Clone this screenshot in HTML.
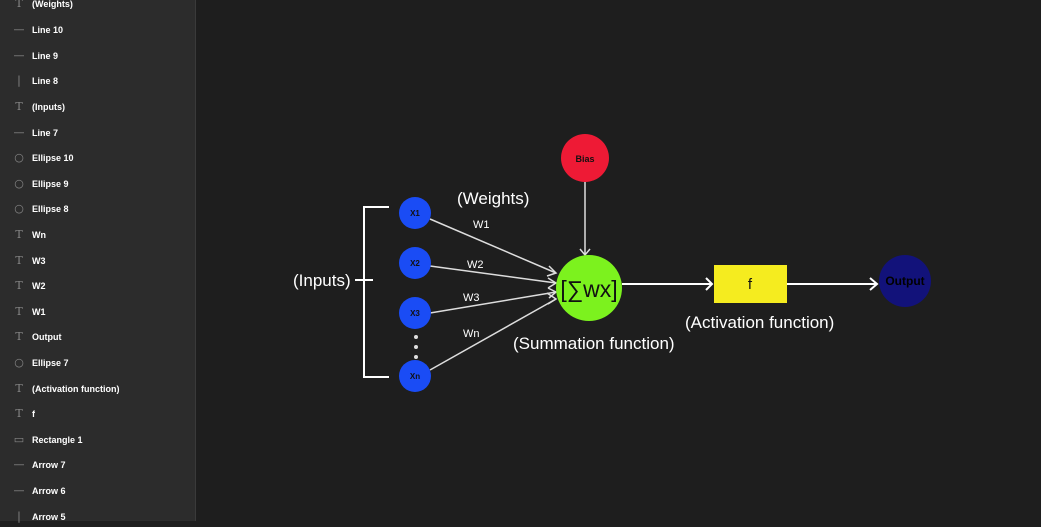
<!DOCTYPE html>
<html><head><style>
body{margin:0;width:1041px;height:521px;overflow:hidden;background:#1e1e1e;font-family:"Liberation Sans",sans-serif;position:relative}
#sb{position:absolute;left:0;top:0;width:195px;height:521px;background:#2c2c2c;border-right:1px solid #3a3a3a}
.r{position:absolute;left:0;height:20px;width:195px;color:#fff;font-size:9px;font-weight:bold;line-height:20px}
.r span{position:absolute;left:32px}
.ic{position:absolute;left:13px;top:4px;width:12px;height:12px;color:#888;font-size:11px;line-height:12px;text-align:center;font-weight:normal;font-style:normal;font-family:"DejaVu Serif",serif}
</style></head><body>
<div id="sb">
<div class="r" style="top:-6px"><i class="ic">T</i><span>(Weights)</span></div>
<div class="r" style="top:20px"><i class="ic">—</i><span>Line 10</span></div>
<div class="r" style="top:46px"><i class="ic">—</i><span>Line 9</span></div>
<div class="r" style="top:71px"><i class="ic">|</i><span>Line 8</span></div>
<div class="r" style="top:97px"><i class="ic">T</i><span>(Inputs)</span></div>
<div class="r" style="top:123px"><i class="ic">—</i><span>Line 7</span></div>
<div class="r" style="top:148px"><i class="ic">○</i><span>Ellipse 10</span></div>
<div class="r" style="top:174px"><i class="ic">○</i><span>Ellipse 9</span></div>
<div class="r" style="top:199px"><i class="ic">○</i><span>Ellipse 8</span></div>
<div class="r" style="top:225px"><i class="ic">T</i><span>Wn</span></div>
<div class="r" style="top:251px"><i class="ic">T</i><span>W3</span></div>
<div class="r" style="top:276px"><i class="ic">T</i><span>W2</span></div>
<div class="r" style="top:302px"><i class="ic">T</i><span>W1</span></div>
<div class="r" style="top:327px"><i class="ic">T</i><span>Output</span></div>
<div class="r" style="top:353px"><i class="ic">○</i><span>Ellipse 7</span></div>
<div class="r" style="top:379px"><i class="ic">T</i><span>(Activation function)</span></div>
<div class="r" style="top:404px"><i class="ic">T</i><span>f</span></div>
<div class="r" style="top:430px"><i class="ic">▭</i><span>Rectangle 1</span></div>
<div class="r" style="top:455px"><i class="ic">—</i><span>Arrow 7</span></div>
<div class="r" style="top:481px"><i class="ic">—</i><span>Arrow 6</span></div>
<div class="r" style="top:507px"><i class="ic">|</i><span>Arrow 5</span></div>
</div>
<svg style="position:absolute;left:0;top:0" width="1041" height="521" font-family="Liberation Sans, sans-serif">
<g stroke="#fff" stroke-width="2" fill="none">
<path d="M389 207H364V377H389M355 280H373"/>
</g>
<g stroke="#ddd" stroke-width="1.5" fill="none">
<path d="M430 219L556 273M430 266L556 283M430 313L556 292M430 370L556 299"/>
<path d="M549 266L556 273L547 276M548 278L556 283L548 288M548 288L556 292L549 298M547 293L556 299L548 304"/>
<path d="M585 182V254M580 249L585 255L590 249"/>
</g>
<g stroke="#fff" stroke-width="2" fill="none">
<path d="M622 284H712M706 278L712 284L706 290M787 284H876M870 278L877 284L870 290"/>
</g>
<circle cx="585" cy="158" r="24" fill="#ee1a35"/>
<text x="585" y="162" font-size="9" font-weight="bold" text-anchor="middle" fill="#111">Bias</text>
<circle cx="589" cy="288" r="33" fill="#7cf21e"/>
<text x="589" y="297" font-size="23" text-anchor="middle" fill="#111">[∑wx]</text>
<g fill="#1a4cf5"><circle cx="415" cy="213" r="16"/><circle cx="415" cy="263" r="16"/><circle cx="415" cy="313" r="16"/><circle cx="415" cy="376" r="16"/></g>
<g font-size="8" font-weight="bold" text-anchor="middle" fill="#111"><text x="415" y="216">X1</text><text x="415" y="266">X2</text><text x="415" y="316">X3</text><text x="415" y="379">Xn</text></g>
<g fill="#ddd"><circle cx="416" cy="337" r="2"/><circle cx="416" cy="347" r="2"/><circle cx="416" cy="357" r="2"/></g>
<rect x="714" y="265" width="73" height="38" fill="#f5ec1f"/>
<text x="750" y="289" font-size="15" text-anchor="middle" fill="#111">f</text>
<circle cx="905" cy="281" r="26" fill="#12127a"/>
<text x="905" y="285" font-size="12" font-weight="bold" text-anchor="middle" fill="#000">Output</text>
<g fill="#fff" font-size="17"><text x="457" y="204">(Weights)</text><text x="293" y="286">(Inputs)</text><text x="513" y="349">(Summation function)</text><text x="685" y="328">(Activation function)</text></g>
<g fill="#fff" font-size="11"><text x="473" y="228">W1</text><text x="467" y="268">W2</text><text x="463" y="301">W3</text><text x="463" y="337">Wn</text></g>
</svg>
</body></html>
